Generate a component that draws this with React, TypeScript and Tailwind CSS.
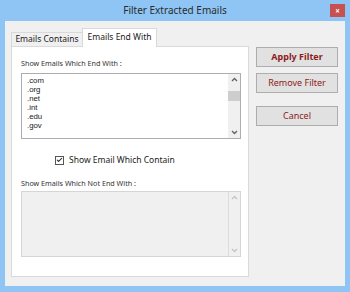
import { Check } from 'lucide-react'

const endings = ['.com', '.org', '.net', '.int', '.edu', '.gov']

function Arrow({ up, light }: { up?: boolean; light?: boolean }) {
  return (
    <svg width="7" height="5" viewBox="0 0 7 5" className="block">
      <path
        d={up ? 'M1 4 L3.5 1.5 L6 4' : 'M1 1 L3.5 3.5 L6 1'}
        fill="none"
        stroke={light ? '#c4c4c4' : '#606060'}
        strokeWidth="1.3"
      />
    </svg>
  )
}

function ListBox({ items, disabled }: { items: string[]; disabled?: boolean }) {
  return (
    <div
      className={
        'ml-[9px] w-[220px] h-[66px] flex border ' +
        (disabled ? 'bg-[#f0f0f0] border-[#d5d5d5]' : 'bg-white border-[#abadb3]')
      }
    >
      <div className="flex-1 pl-[5px] pt-[2px] font-['Liberation_Sans',sans-serif] text-[7.8px] leading-[9px] text-[#1a1a1a]">
        {items.map((it) => (
          <div key={it}>{it}</div>
        ))}
      </div>
      <div
        className={
          'w-[12px] flex flex-col items-center justify-between py-[3px] ' +
          (disabled ? 'border-l border-[#dcdcdc]' : 'bg-[#f0f0f0]')
        }
      >
        <Arrow up light={disabled} />
        {!disabled && <div className="w-[12px] h-[10px] bg-[#cdcdcd] -mt-[20px]" />}
        <Arrow light={disabled} />
      </div>
    </div>
  )
}

function Btn({ label, bold }: { label: string; bold?: boolean }) {
  return (
    <button
      className={
        'w-[82px] h-[20px] bg-[#e1e1e1] border border-[#adadad] text-[#8b1c1c] ' +
        (bold ? 'font-bold text-[9px]' : 'text-[9px]')
      }
    >
      {label}
    </button>
  )
}

export default function App() {
  return (
    <div
      className="w-[350px] h-[292px] bg-[#8ec5f5] flex flex-col px-[5px] pb-[6px] overflow-hidden"
      style={{ fontFamily: '"Noto Sans", "Open Sans", sans-serif' }}
    >
      {/* Title bar */}
      <div className="relative h-[21px] flex items-center justify-center">
        <span className="text-[10px] text-[#2b2b2b]">Filter Extracted Emails</span>
        <div className="absolute right-[0px] top-[4px] w-[15px] h-[13px] bg-[#c75050] flex items-center justify-center">
          <span className="text-white text-[8px] font-bold leading-none">×</span>
        </div>
      </div>

      {/* Client */}
      <div className="flex-1 bg-[#f0f0f0] flex pl-[6px] pt-[7px] pb-[9px]">
        <div className="w-[238px] flex flex-col">
          {/* Tabs */}
          <div className="h-[18px] flex items-end relative z-10">
            <div className="h-[14px] w-[72px] border border-b-0 border-[#d9d9d9] bg-[#f0f0f0] flex items-center justify-center text-[8.5px] text-[#222]">
              Emails Contains
            </div>
            <div className="h-[19px] -mb-[1px] -ml-[1px] w-[75px] border border-b-0 border-[#d9d9d9] bg-white flex items-center justify-center text-[8.5px] text-[#222] pb-[2px]">
              Emails End With
            </div>
          </div>
          {/* Panel */}
          <div className="flex-1 bg-white border border-[#d9d9d9] flex flex-col pt-[11px]">
            <div className="pl-[9px] text-[7.2px] text-[#333] h-[15px]">Show Emails Which End With :</div>
            <ListBox items={endings} />
            <div className="flex items-center pl-[43px] mt-[16px] h-[10px]">
              <div className="w-[9px] h-[9px] border border-[#555] bg-white flex items-center justify-center">
                <Check size={8} strokeWidth={3.5} color="#222" />
              </div>
              <span className="ml-[5px] text-[8.5px] text-[#222]">Show Email Which Contain</span>
            </div>
            <div className="pl-[9px] text-[7.2px] text-[#333] mt-[13px] h-[13px]">Show Emails Which Not End With :</div>
            <ListBox items={[]} disabled />
          </div>
        </div>

        {/* Buttons */}
        <div className="ml-[7px] pt-[19px] flex flex-col gap-[6px]">
          <Btn label="Apply Filter" bold />
          <Btn label="Remove Filter" />
          <div className="mt-[2px]">
            <Btn label="Cancel" />
          </div>
        </div>
      </div>
    </div>
  )
}
